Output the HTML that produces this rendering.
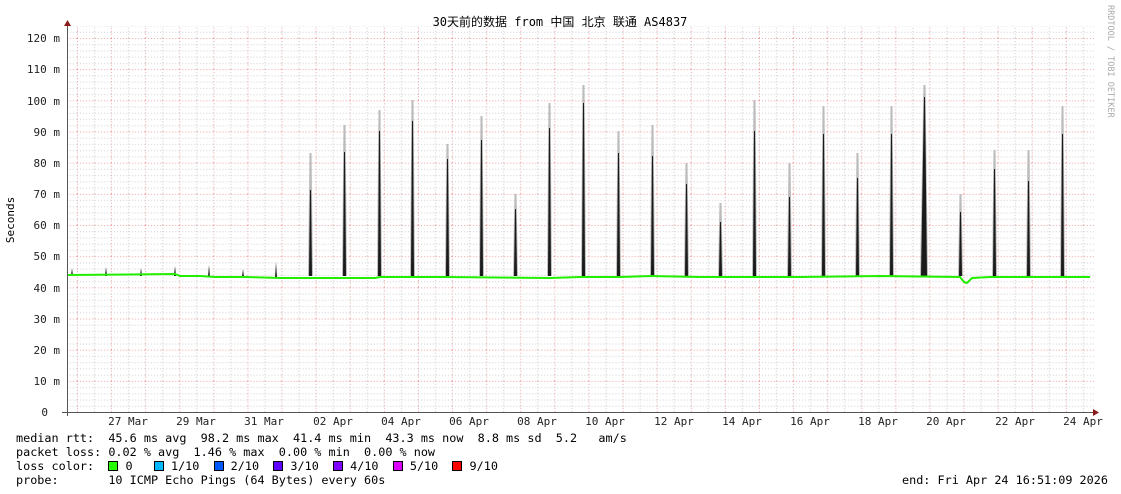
<!DOCTYPE html>
<html><head><meta charset="utf-8"><style>
body{margin:0;background:#fff;width:1121px;height:494px;overflow:hidden;position:relative;font-family:"DejaVu Sans Mono","Liberation Mono","Noto Sans CJK SC",monospace;}
.t{position:absolute;font-size:11.8px;color:#000;white-space:pre;line-height:14px;}
.sw{display:inline-block;width:8px;height:8px;border:1px solid #000;vertical-align:-1px;}
</style></head><body>
<svg width="1121" height="494" style="position:absolute;left:0;top:0">
<defs>
<pattern id="g" patternUnits="userSpaceOnUse" x="77" y="38" width="34.1" height="31.17">
<line x1="0.5" y1="0" x2="0.5" y2="31.17" stroke="#f0a0a0" stroke-dasharray="1,2"/>
<line x1="17.5" y1="0" x2="17.5" y2="31.17" stroke="#c8c8c8" stroke-dasharray="1,2"/>
<line x1="0" y1="0.5" x2="34.1" y2="0.5" stroke="#f0a0a0" stroke-dasharray="1,2"/>
<line x1="0" y1="6.73" x2="34.1" y2="6.73" stroke="#d0d0d0" stroke-dasharray="1,2"/>
<line x1="0" y1="12.97" x2="34.1" y2="12.97" stroke="#d0d0d0" stroke-dasharray="1,2"/>
<line x1="0" y1="19.2" x2="34.1" y2="19.2" stroke="#d0d0d0" stroke-dasharray="1,2"/>
<line x1="0" y1="25.44" x2="34.1" y2="25.44" stroke="#d0d0d0" stroke-dasharray="1,2"/>
</pattern>
</defs>
<rect x="68" y="26" width="1026" height="386" fill="url(#g)"/>
<g font-size="11" font-family="DejaVu Sans Mono,monospace" fill="#222" text-anchor="end">
<text x="60" y="42">120 m</text><text x="60" y="73">110 m</text><text x="60" y="105">100 m</text>
<text x="60" y="136">90 m</text><text x="60" y="167">80 m</text><text x="60" y="198">70 m</text>
<text x="60" y="229">60 m</text><text x="60" y="260">50 m</text><text x="60" y="292">40 m</text>
<text x="60" y="323">30 m</text><text x="60" y="354">20 m</text><text x="60" y="385">10 m</text>
<text x="48" y="416">0</text>
</g>
<g font-size="11" font-family="DejaVu Sans Mono,monospace" fill="#222" text-anchor="middle">
<text x="128" y="425">27 Mar</text><text x="196" y="425">29 Mar</text><text x="264" y="425">31 Mar</text>
<text x="333" y="425">02 Apr</text><text x="401" y="425">04 Apr</text><text x="469" y="425">06 Apr</text>
<text x="537" y="425">08 Apr</text><text x="605" y="425">10 Apr</text><text x="674" y="425">12 Apr</text>
<text x="742" y="425">14 Apr</text><text x="810" y="425">16 Apr</text><text x="878" y="425">18 Apr</text>
<text x="946" y="425">20 Apr</text><text x="1015" y="425">22 Apr</text><text x="1083" y="425">24 Apr</text>
</g>
<text x="560" y="26" font-size="12" text-anchor="middle" font-family="DejaVu Sans Mono,Noto Sans CJK SC,monospace" fill="#000">30天前的数据 from 中国 北京 联通 AS4837</text>
<text transform="translate(14,220) rotate(-90)" font-size="11" text-anchor="middle" font-family="DejaVu Sans Mono,monospace" fill="#000">Seconds</text>
<text transform="translate(1108,5) rotate(90)" font-size="8.5" font-family="DejaVu Sans Mono,monospace" fill="#aaa">RRDTOOL / TOBI OETIKER</text>
<g fill="#bbb">
<polygon points="308,276 309.5,153 311.5,153 313,276"/><polygon points="342,276 343.5,125 345.5,125 347,276"/><polygon points="377,276 378.5,110 380.5,110 382,276"/><polygon points="410,276 411.5,100 413.5,100 415,276"/><polygon points="445,276 446.5,144 448.5,144 450,276"/><polygon points="479,276 480.5,116 482.5,116 484,276"/><polygon points="513,276 514.5,194 516.5,194 518,276"/><polygon points="547,276 548.5,103 550.5,103 552,276"/><polygon points="581,276 582.5,85 584.5,85 586,276"/><polygon points="616,276 617.5,131 619.5,131 621,276"/><polygon points="650,276 651.5,125 653.5,125 655,276"/><polygon points="684,276 685.5,163 687.5,163 689,276"/><polygon points="718,276 719.5,203 721.5,203 723,276"/><polygon points="752,276 753.5,100 755.5,100 757,276"/><polygon points="787,276 788.5,163 790.5,163 792,276"/><polygon points="821,276 822.5,106 824.5,106 826,276"/><polygon points="855,276 856.5,153 858.5,153 860,276"/><polygon points="889,276 890.5,106 892.5,106 894,276"/><polygon points="920,276 923.5,85 925.5,85 928,276"/><polygon points="958,276 959.5,194 961.5,194 963,276"/><polygon points="992,276 993.5,150 995.5,150 997,276"/><polygon points="1026,276 1027.5,150 1029.5,150 1031,276"/><polygon points="1060,276 1061.5,106 1063.5,106 1065,276"/>
</g>
<g fill="#1a1a1a">
<polygon points="309,276 310,190 311,190 312,276"/><polygon points="343,276 344,152 345,152 346,276"/><polygon points="378,276 379,131 380,131 381,276"/><polygon points="411,276 412,121 413,121 414,276"/><polygon points="446,276 447,159 448,159 449,276"/><polygon points="480,276 481,140 482,140 483,276"/><polygon points="514,276 515,209 516,209 517,276"/><polygon points="548,276 549,128 550,128 551,276"/><polygon points="582,276 583,103 584,103 585,276"/><polygon points="617,276 618,153 619,153 620,276"/><polygon points="651,276 652,156 653,156 654,276"/><polygon points="685,276 686,184 687,184 688,276"/><polygon points="719,276 720,222 721,222 722,276"/><polygon points="753,276 754,131 755,131 756,276"/><polygon points="788,276 789,197 790,197 791,276"/><polygon points="822,276 823,134 824,134 825,276"/><polygon points="856,276 857,178 858,178 859,276"/><polygon points="890,276 891,134 892,134 893,276"/><polygon points="921,276 924,97 925,97 927,276"/><polygon points="959,276 960,212 961,212 962,276"/><polygon points="993,276 994,169 995,169 996,276"/><polygon points="1027,276 1028,181 1029,181 1030,276"/><polygon points="1061,276 1062,134 1063,134 1064,276"/>
<polygon points="71,276 72,268 73,276"/><polygon points="105,276 106,267 107,276"/><polygon points="140,276 141,268 142,276"/><polygon points="174,276 175,266 176,276"/><polygon points="208,277 209,265 210,277"/><polygon points="242,277 243,269 244,277"/><polygon points="275,278 276,262 277,278"/>
</g>
<polyline fill="none" stroke="#22ee00" stroke-width="2" points="68,275 175,274 180,276 200,276 215,277 245,277 280,278 305,278 312,278 375,278 380,277 440,277 445,277 550,278 580,277 620,277 650,276 700,277 800,277 880,276 960,277 964,282 967,283 972,278 990,277 1090,277"/>
<line x1="67.5" y1="24" x2="67.5" y2="416" stroke="#555"/>
<line x1="62" y1="412.5" x2="1095" y2="412.5" stroke="#555"/>
<polygon points="64,26 67.5,20 71,26" fill="#8b1a1a"/>
<polygon points="1093,409 1099,412.5 1093,416" fill="#8b1a1a"/>
</svg>
<div class="t" style="left:16px;top:431px">median rtt:  45.6 ms avg  98.2 ms max  41.4 ms min  43.3 ms now  8.8 ms sd  5.2   am/s</div>
<div class="t" style="left:16px;top:445px">packet loss: 0.02 % avg  1.46 % max  0.00 % min  0.00 % now</div>
<div class="t" style="left:16px;top:459px">loss color:  <span class="sw" style="background:#26ff00"></span> 0   <span class="sw" style="background:#00b8ff"></span> 1/10  <span class="sw" style="background:#0059ff"></span> 2/10  <span class="sw" style="background:#5e00ff"></span> 3/10  <span class="sw" style="background:#7e00ff"></span> 4/10  <span class="sw" style="background:#dd00ff"></span> 5/10  <span class="sw" style="background:#ff0000"></span> 9/10</div>
<div class="t" style="left:16px;top:473px">probe:       10 ICMP Echo Pings (64 Bytes) every 60s</div>
<div class="t" style="left:902px;top:473px">end: Fri Apr 24 16:51:09 2026</div>
</body></html>
